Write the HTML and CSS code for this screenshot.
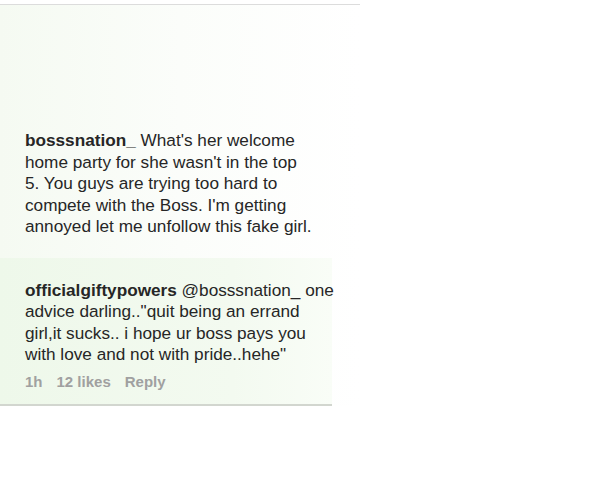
FILE: index.html
```html
<!DOCTYPE html>
<html lang="en">
<head>
    <meta charset="UTF-8">
    <title>Comments</title>
    <link rel="stylesheet" href="styles.css">
</head>
<body>
    <div class="shot">
        <div class="comment first">
            <p class="text"><span class="user">bosssnation_</span> What's her welcome<br>home party for she wasn't in the top<br>5. You guys are trying too hard to<br>compete with the Boss. I'm getting<br>annoyed let me unfollow this fake girl.</p>
        </div>
        <div class="comment second">
            <p class="text"><span class="user">officialgiftypowers</span> @bosssnation_ one<br>advice darling.."quit being an errand<br>girl,it sucks.. i hope ur boss pays you<br>with love and not with pride..hehe"</p>
            <div class="meta">
                <span>1h</span>
                <span>12 likes</span>
                <span>Reply</span>
            </div>
        </div>
    </div>
</body>
</html>
```

FILE: styles.css
```css
* { box-sizing: border-box; }
body {
    margin: 0;
    background: #fff;
    font-family: 'Liberation Sans', Arial, sans-serif;
    color: #262626;
}
.shot {
    width: 360px;
    margin-top: 4px;
    border-top: 1px solid #dcdcdc;
    background: linear-gradient(90deg, #f5faf2 0%, #fbfdfa 50%, #ffffff 100%);
}
.comment {
    padding: 0 0 0 25px;
}
.first {
    padding-top: 125px;
    padding-bottom: 20px;
}
.second {
    width: 332px;
    padding-top: 22px;
    padding-bottom: 14px;
    background: linear-gradient(90deg, #eef8ea 0%, #f3faf0 70%, #f9fdf7 100%);
    border-bottom: 2px solid #d2d6cf;
}
.text {
    margin: 0;
    font-size: 17.2px;
    line-height: 21.5px;
    white-space: nowrap;
}
.user {
    font-weight: 700;
}
.meta {
    margin-top: 7px;
    display: flex;
    gap: 14px;
    font-size: 15px;
    font-weight: 700;
    color: #a0a0a0;
}
```
